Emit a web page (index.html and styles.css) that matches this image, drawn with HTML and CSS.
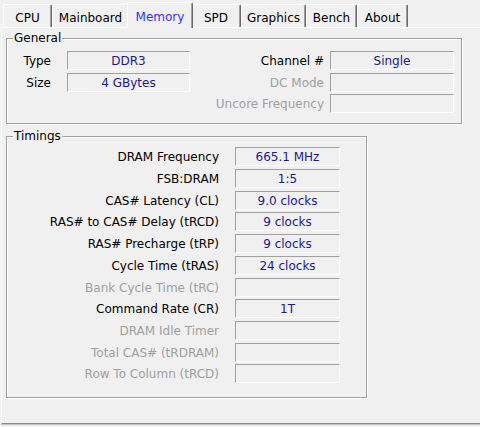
FILE: index.html
```html
<!DOCTYPE html>
<html>
<head>
<meta charset="utf-8">
<link rel="stylesheet" href="styles.css">
</head>
<body>
<div class="window">
  <div class="tabs">
    <div class="tab t-cpu">CPU</div>
    <div class="tab t-mainboard">Mainboard</div>
    <div class="tab t-memory selected">Memory</div>
    <div class="tab t-spd">SPD</div>
    <div class="tab t-graphics">Graphics</div>
    <div class="tab t-bench">Bench</div>
    <div class="tab t-about">About</div>
  </div>
  <div class="panel">
    <fieldset class="group general">
      <legend>General</legend>
      <div class="general-grid">
        <div class="label lab-left">Type</div>
        <div class="field">DDR3</div>
        <div class="label lab-right">Channel #</div>
        <div class="field">Single</div>

        <div class="label lab-left">Size</div>
        <div class="field">4 GBytes</div>
        <div class="label lab-right disabled">DC Mode</div>
        <div class="field"></div>

        <div></div>
        <div></div>
        <div class="label lab-right disabled">Uncore Frequency</div>
        <div class="field"></div>
      </div>
    </fieldset>

    <fieldset class="group timings">
      <legend>Timings</legend>
      <div class="timings-grid">
        <div class="label lab-left">DRAM Frequency</div>
        <div class="field">665.1 MHz</div>
        <div class="label lab-left">FSB:DRAM</div>
        <div class="field">1:5</div>
        <div class="label lab-left">CAS# Latency (CL)</div>
        <div class="field">9.0 clocks</div>
        <div class="label lab-left">RAS# to CAS# Delay (tRCD)</div>
        <div class="field">9 clocks</div>
        <div class="label lab-left">RAS# Precharge (tRP)</div>
        <div class="field">9 clocks</div>
        <div class="label lab-left">Cycle Time (tRAS)</div>
        <div class="field">24 clocks</div>
        <div class="label lab-left disabled">Bank Cycle Time (tRC)</div>
        <div class="field"></div>
        <div class="label lab-left">Command Rate (CR)</div>
        <div class="field">1T</div>
        <div class="label lab-left disabled">DRAM Idle Timer</div>
        <div class="field"></div>
        <div class="label lab-left disabled">Total CAS# (tRDRAM)</div>
        <div class="field"></div>
        <div class="label lab-left disabled">Row To Column (tRCD)</div>
        <div class="field"></div>
      </div>
    </fieldset>
  </div>
</div>
</body>
</html>
```

FILE: styles.css
```css
html, body {
  margin: 0;
  padding: 0;
  background: #f0f0f0;
  overflow: hidden;
}

body {
  width: 480px;
  height: 427px;
  font-family: "DejaVu Sans", Verdana, sans-serif;
  font-size: 12px;
  color: #000;
}

.window {
  width: 480px;
  height: 427px;
}

/* ---------- tabs ---------- */
.tabs {
  display: flex;
  align-items: flex-end;
  height: 27px;
  padding-left: 3px;
  box-sizing: border-box;
}

.tab {
  height: 23px;
  box-sizing: border-box;
  border-top: 1px solid #ffffff;
  border-left: 1px solid #ffffff;
  border-right: 1px solid #696969;
  box-shadow: inset -1px 0 0 #a0a0a0;
  border-radius: 2px 2px 0 0;
  padding-top: 6px;
  line-height: 14px;
  text-align: center;
  white-space: nowrap;
  background: #f0f0f0;
}

.t-cpu { width: 49px; }
.t-mainboard { width: 77px; }
.t-memory { width: 62px; }
.t-spd { width: 50px; }
.t-graphics { width: 65px; }
.t-bench { width: 51px; }
.t-about { width: 51px; }

.tab.selected {
  position: relative;
  z-index: 2;
  height: 26px;
  width: 66px;
  margin: 0 -2px -1px -2px;
  padding-top: 7px;
  color: #3333ff;
}

/* ---------- panel ---------- */
.panel {
  margin-left: 1px;
  width: 481px;
  height: 397px;
  box-sizing: border-box;
  border-top: 1px solid #ffffff;
  border-left: 1px solid #ffffff;
  border-bottom: 1px solid #8a8a8a;
  box-shadow: 0 1px 0 #c4c4c4;
  padding: 3px 0 0 4px;
}

/* ---------- group boxes ---------- */
.group {
  margin: 0;
  padding: 0;
  min-width: 0;
  border: 1px solid #a0a0a0;
  box-shadow: inset 1px 1px 0 #ffffff, 1px 1px 0 #ffffff;
}

.group legend {
  margin-left: 6px;
  padding: 0 1px;
  line-height: 14px;
  background: #f0f0f0;
}

.general {
  width: 456px;
  box-sizing: border-box;
}

.timings {
  width: 361px;
  box-sizing: border-box;
  margin-top: 5px;
}

.general-grid {
  display: grid;
  grid-template-columns: 60px 123px 1fr 124px;
  grid-auto-rows: 19px;
  row-gap: 2.7px;
  padding: 6px 7px 10px 0;
}

.timings-grid {
  display: grid;
  grid-template-columns: 228px 105px;
  grid-auto-rows: 19px;
  row-gap: 2.7px;
  padding: 4px 0 14px 0;
}

/* ---------- labels & fields ---------- */
.label {
  height: 19px;
  box-sizing: border-box;
  padding-top: 3px;
  line-height: 15px;
  text-align: right;
  white-space: nowrap;
}

.lab-left { padding-right: 16px; }
.lab-right { padding-right: 6px; }

.label.disabled {
  color: #a0a0a0;
}

.field {
  height: 19px;
  box-sizing: border-box;
  border-style: solid;
  border-width: 1px;
  border-color: #a0a0a0 #ffffff #ffffff #a0a0a0;
  padding-top: 2px;
  line-height: 15px;
  text-align: center;
  color: #1a1a8c;
  white-space: nowrap;
}
```
